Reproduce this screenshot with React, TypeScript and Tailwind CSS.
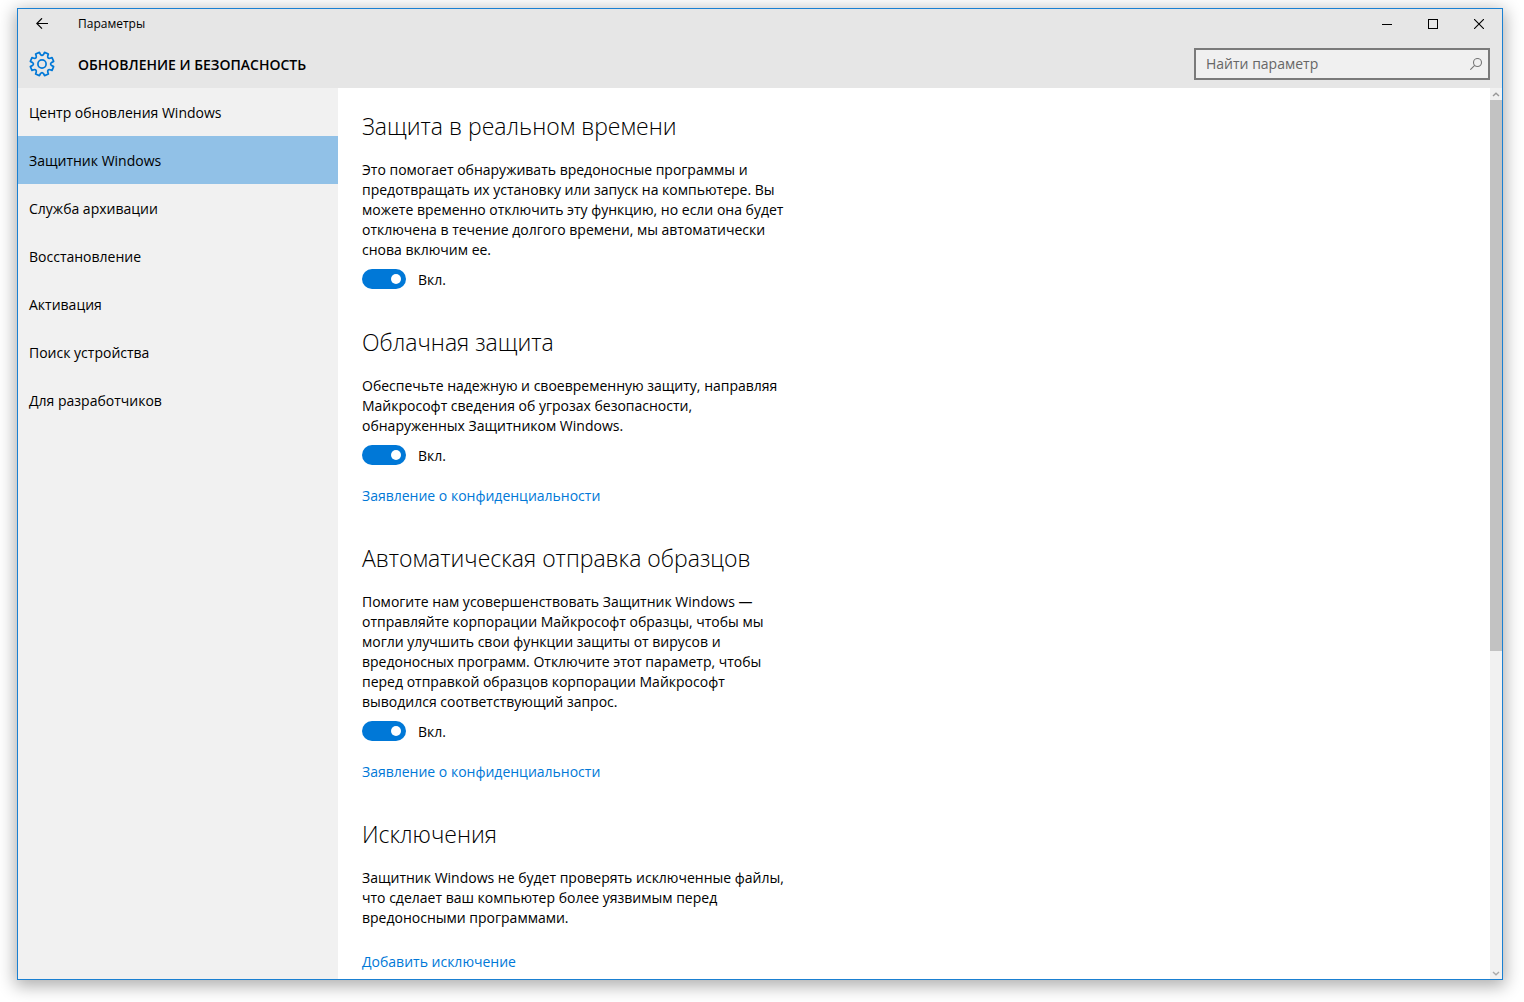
import { useState } from "react";

type Section = {
  title: string;
  text: string;
  toggle?: boolean;
  link?: string;
};

const navItems = [
  "Центр обновления Windows",
  "Защитник Windows",
  "Служба архивации",
  "Восстановление",
  "Активация",
  "Поиск устройства",
  "Для разработчиков",
];

const sections: Section[] = [
  {
    title: "Защита в реальном времени",
    text: "Это помогает обнаруживать вредоносные программы и\nпредотвращать их установку или запуск на компьютере. Вы\nможете временно отключить эту функцию, но если она будет\nотключена в течение долгого времени, мы автоматически\nснова включим ее.",
    toggle: true,
  },
  {
    title: "Облачная защита",
    text: "Обеспечьте надежную и своевременную защиту, направляя\nМайкрософт сведения об угрозах безопасности,\nобнаруженных Защитником Windows.",
    toggle: true,
    link: "Заявление о конфиденциальности",
  },
  {
    title: "Автоматическая отправка образцов",
    text: "Помогите нам усовершенствовать Защитник Windows —\nотправляйте корпорации Майкрософт образцы, чтобы мы\nмогли улучшить свои функции защиты от вирусов и\nвредоносных программ. Отключите этот параметр, чтобы\nперед отправкой образцов корпорации Майкрософт\nвыводился соответствующий запрос.",
    toggle: true,
    link: "Заявление о конфиденциальности",
  },
  {
    title: "Исключения",
    text: "Защитник Windows не будет проверять исключенные файлы,\nчто сделает ваш компьютер более уязвимым перед\nвредоносными программами.",
    link: "Добавить исключение",
  },
];

function polar(degrees: number, radius: number): string {
  const angle = (degrees * Math.PI) / 180;
  return `${(13 + radius * Math.sin(angle)).toFixed(2)} ${(13 - radius * Math.cos(angle)).toFixed(2)}`;
}

// Outline of an eight-toothed gear with rounded notches, one of them at the top.
function gearPath(): string {
  let d = "";
  for (let i = 0; i < 8; i++) {
    const tooth = i * 45 + 22.5;
    d += `${i === 0 ? "M" : "L"}${polar(tooth - 10, 11.9)}L${polar(tooth + 10, 11.9)}`;
    d += `L${polar(tooth + 13, 9.9)}Q${polar(tooth + 22.5, 7.4)} ${polar(tooth + 32, 9.9)}`;
  }
  return `${d}Z`;
}

function GearIcon() {
  return (
    <svg width="26" height="26" viewBox="0 0 26 26" fill="none" stroke="#0078d7" strokeWidth="1.7" strokeLinejoin="round" aria-hidden="true">
      <path d={gearPath()} />
      <circle cx="13" cy="13" r="4.1" />
    </svg>
  );
}

function Toggle({ label }: { label: string }) {
  const [on, setOn] = useState(true);
  return (
    <label className="mt-2 flex h-[22px] w-fit items-center gap-3">
      <input
        type="checkbox"
        role="switch"
        aria-label={label}
        checked={on}
        onChange={() => setOn(!on)}
        className="peer sr-only"
      />
      <span className="flex h-5 w-11 items-center rounded-full bg-[#999999] px-[5px] peer-checked:justify-end peer-checked:bg-[#0078d7]">
        <span className="size-[10px] rounded-full bg-white" />
      </span>
      <span className="pt-0.5">{on ? "Вкл." : "Откл."}</span>
    </label>
  );
}

export default function App() {
  const [active, setActive] = useState(1);
  return (
    <div className="h-screen bg-white pt-2 pr-[21px] pb-[22px] pl-[17px] font-['Open_Sans','Noto_Sans',sans-serif] text-[14px] leading-5 text-black">
      <div className="flex h-full flex-col border border-[#1a80d2] bg-white shadow-[0_4px_16px_2px_rgba(0,0,0,0.32)]">
        <header className="bg-[#e6e6e6]">
          <div className="flex h-[30px] items-center">
            <button type="button" aria-label="Назад" className="flex h-full w-12 items-center justify-center">
              <svg width="12" height="12" viewBox="0 0 12 12" fill="none" stroke="#000" strokeWidth="1.2" aria-hidden="true">
                <path d="M12 5.5H.8M6 .3L.8 5.5L6 10.7" />
              </svg>
            </button>
            <span className="ml-3 flex-1 text-[12px] leading-4">Параметры</span>
            <button type="button" aria-label="Свернуть" className="flex h-full w-[46px] items-center justify-center">
              <svg width="10" height="10" viewBox="0 0 10 10" shapeRendering="crispEdges" aria-hidden="true">
                <path d="M0 5h10v1H0z" />
              </svg>
            </button>
            <button type="button" aria-label="Развернуть" className="flex h-full w-[46px] items-center justify-center">
              <svg width="10" height="10" viewBox="0 0 10 10" fill="none" stroke="#000" shapeRendering="crispEdges" aria-hidden="true">
                <path d="M.5 .5h9v9h-9z" />
              </svg>
            </button>
            <button type="button" aria-label="Закрыть" className="flex h-full w-[46px] items-center justify-center">
              <svg width="10" height="10" viewBox="0 0 10 10" fill="none" stroke="#000" strokeWidth="1.1" aria-hidden="true">
                <path d="M0 0L10 10M10 0L0 10" />
              </svg>
            </button>
          </div>
          <div className="flex h-[49px] items-center pt-px pr-3 pl-[11px]">
            <GearIcon />
            <h1 className="ml-[23px] flex-1 pt-px text-[14px] font-semibold">ОБНОВЛЕНИЕ И БЕЗОПАСНОСТЬ</h1>
            <div className="flex h-8 w-[296px] items-center border-2 border-[#7a7a7a] bg-[#f0f0f0] pr-1.5 pl-2.5">
              <input
                type="text"
                aria-label="Найти параметр"
                placeholder="Найти параметр"
                className="min-w-0 flex-1 bg-transparent outline-none placeholder:text-[#666666]"
              />
              <svg width="12" height="12" viewBox="0 0 12 12" fill="none" stroke="#777" strokeWidth="1.1" aria-hidden="true">
                <circle cx="7.5" cy="4.5" r="4" />
                <path d="M4.7 7.3L.3 11.7" />
              </svg>
            </div>
          </div>
        </header>

        <div className="flex min-h-0 flex-1">
          <nav className="w-80 shrink-0 bg-[#f1f1f1]">
            <ul>
              {navItems.map((item, i) => (
                <li key={item}>
                  <button
                    type="button"
                    aria-current={i === active ? "page" : undefined}
                    onClick={() => setActive(i)}
                    className={
                      i === active
                        ? "flex h-12 w-full items-center bg-[#91c1e7] px-[11px] pt-0.5 text-left"
                        : "flex h-12 w-full items-center px-[11px] pt-0.5 text-left"
                    }
                  >
                    {item}
                  </button>
                </li>
              ))}
            </ul>
          </nav>

          <main className="flex min-w-0 flex-1 flex-col gap-[38px] overflow-y-auto px-6 pt-6 [scrollbar-width:none]">
            {sections.map((s) => (
              <section key={s.title}>
                <h2 className="text-[23px] leading-7 font-[350]">{s.title}</h2>
                <p className="mt-5 whitespace-pre-line">{s.text}</p>
                {s.toggle && <Toggle label={s.title} />}
                {s.link && (
                  <a href="#" className={s.toggle ? "mt-5 block w-fit text-[#0078d7]" : "mt-6 block w-fit text-[#0078d7]"}>
                    {s.link}
                  </a>
                )}
              </section>
            ))}
          </main>

          <div className="flex w-3 shrink-0 flex-col bg-[#f1f1f1]" aria-hidden="true">
            <div className="flex h-3 items-center justify-center">
              <svg width="8" height="5" viewBox="0 0 8 5" fill="none" stroke="#999" strokeWidth="1.4">
                <path d="M1 4L4 1.2L7 4" />
              </svg>
            </div>
            <div className="flex-1">
              <div className="h-[63.5%] bg-[#c2c2c2]" />
            </div>
            <div className="flex h-3 items-center justify-center">
              <svg width="8" height="5" viewBox="0 0 8 5" fill="none" stroke="#aaa" strokeWidth="1.4">
                <path d="M1 1L4 3.8L7 1" />
              </svg>
            </div>
          </div>
        </div>
      </div>
    </div>
  );
}
